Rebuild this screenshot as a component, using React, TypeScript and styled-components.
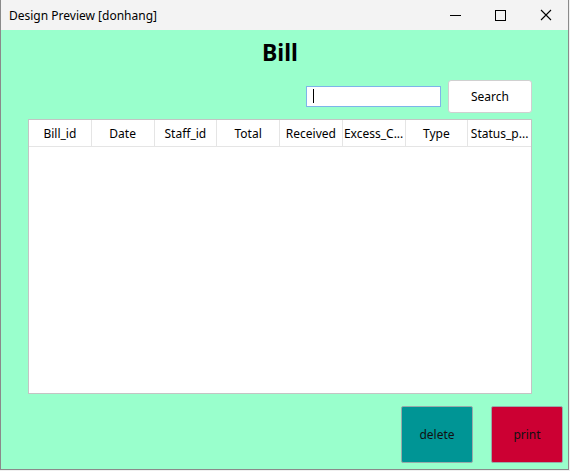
import styled, { createGlobalStyle } from 'styled-components'

const GlobalStyle = createGlobalStyle`
    html, body {
        margin: 0;
        padding: 0;
        background: #f0f0f0;
    }
    body {
        font-family: "Noto Sans", "Open Sans", Arial, sans-serif;
    }
`

const Window = styled.div`
    width: 567px;
    height: 469px;
    border-left: 1px solid #8a8a8a;
    border-right: 1px solid #8a8a8a;
    border-bottom: 1px solid #8a8a8a;
    display: flex;
    flex-direction: column;
    background: #99ffcc;
`

const TitleBar = styled.div`
    height: 30px;
    flex: none;
    background: #f3f3f3;
    display: flex;
    align-items: center;
    justify-content: space-between;
`

const TitleText = styled.span`
    font-family: "Noto Sans", sans-serif;
    font-size: 12px;
    color: #000;
    padding-left: 8px;
`

const Controls = styled.div`
    display: flex;
    height: 100%;
`

const ControlButton = styled.div`
    width: 45px;
    height: 100%;
    display: flex;
    align-items: center;
    justify-content: center;
`

const Content = styled.div`
    flex: 1;
    display: flex;
    flex-direction: column;
    padding: 8px 36px 0 27px;
`

const Heading = styled.h1`
    margin: 0;
    text-align: center;
    font-family: "Noto Sans", sans-serif;
    font-size: 23px;
    font-weight: 700;
    line-height: 28px;
    color: #000;
`

const Toolbar = styled.div`
    display: flex;
    justify-content: flex-end;
    align-items: center;
    gap: 7px;
    margin-top: 14px;
`

const SearchInput = styled.div`
    box-sizing: border-box;
    width: 135px;
    height: 21px;
    margin-top: -1px;
    background: #fff;
    border: 1px solid #7eb4ea;
    display: flex;
    align-items: center;
    padding-left: 6px;
`

const Caret = styled.span`
    display: block;
    width: 1px;
    height: 14px;
    background: #000;
`

const SearchButton = styled.button`
    box-sizing: border-box;
    width: 84px;
    height: 33px;
    background: #fff;
    border: 1px solid #d0d0d0;
    border-radius: 3px;
    font-family: "Noto Sans", sans-serif;
    font-size: 12px;
    color: #000;
    padding: 0;
`

const Table = styled.div`
    box-sizing: border-box;
    margin-top: 6px;
    height: 275px;
    background: #fff;
    border: 1px solid #c4c4c4;
`

const HeaderRow = styled.div`
    display: grid;
    grid-template-columns: repeat(8, 1fr);
    height: 26px;
    border-bottom: 1px solid #e5e5e5;
`

const HeaderCell = styled.div<{ $last?: boolean }>`
    display: flex;
    align-items: center;
    justify-content: center;
    border-right: ${p => (p.$last ? 'none' : '1px solid #e5e5e5')};
    font-family: "Noto Sans", sans-serif;
    font-size: 12px;
    color: #000;
    white-space: nowrap;
    overflow: hidden;
`

const Footer = styled.div`
    display: flex;
    justify-content: flex-end;
    gap: 18px;
    margin-top: 12px;
    margin-right: -31px;
`

const ActionButton = styled.button<{ $color: string }>`
    box-sizing: border-box;
    width: 72px;
    height: 57px;
    background: ${p => p.$color};
    border: 1px solid #9aa;
    border-radius: 2px;
    font-family: "Noto Sans", sans-serif;
    font-size: 12px;
    color: #111;
    padding: 0;
`

const columns = ['Bill_id', 'Date', 'Staff_id', 'Total', 'Received', 'Excess_C...', 'Type', 'Status_p...']

export default function App() {
    return (
        <>
            <GlobalStyle />
            <Window>
                <TitleBar>
                    <TitleText>Design Preview [donhang]</TitleText>
                    <Controls>
                        <ControlButton>
                            <svg width="11" height="11" viewBox="0 0 11 11">
                                <line x1="0" y1="5.5" x2="11" y2="5.5" stroke="#000" strokeWidth="1" />
                            </svg>
                        </ControlButton>
                        <ControlButton>
                            <svg width="11" height="11" viewBox="0 0 11 11">
                                <rect x="0.5" y="0.5" width="10" height="10" fill="none" stroke="#000" strokeWidth="1" />
                            </svg>
                        </ControlButton>
                        <ControlButton>
                            <svg width="12" height="12" viewBox="0 0 12 12">
                                <path d="M1 1 L11 11 M11 1 L1 11" stroke="#000" strokeWidth="1.1" />
                            </svg>
                        </ControlButton>
                    </Controls>
                </TitleBar>
                <Content>
                    <Heading>Bill</Heading>
                    <Toolbar>
                        <SearchInput>
                            <Caret />
                        </SearchInput>
                        <SearchButton>Search</SearchButton>
                    </Toolbar>
                    <Table>
                        <HeaderRow>
                            {columns.map((c, i) => (
                                <HeaderCell key={c} $last={i === columns.length - 1}>{c}</HeaderCell>
                            ))}
                        </HeaderRow>
                    </Table>
                    <Footer>
                        <ActionButton $color="#009595">delete</ActionButton>
                        <ActionButton $color="#cc0033">print</ActionButton>
                    </Footer>
                </Content>
            </Window>
        </>
    )
}
